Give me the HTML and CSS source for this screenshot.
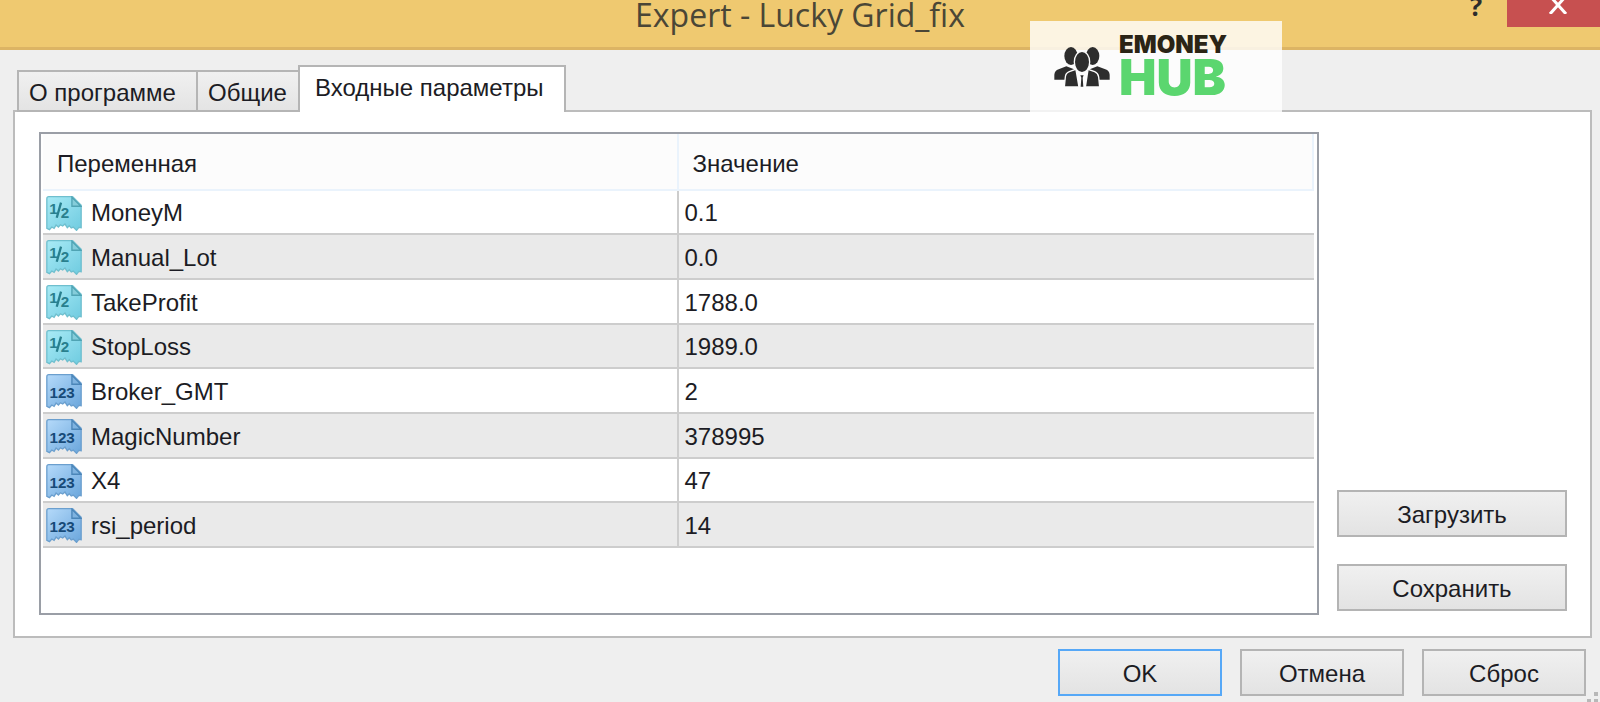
FILE: index.html
```html
<!DOCTYPE html>
<html lang="ru">
<head>
<meta charset="utf-8">
<title>Expert - Lucky Grid_fix</title>
<link rel="stylesheet" href="styles.css">
</head>
<body>
<svg class="defs" aria-hidden="true">
  <defs>
    <linearGradient id="teal" x1="0" y1="0" x2="1" y2="1"><stop offset="0" stop-color="#a9ebf6"/><stop offset="1" stop-color="#6fcbe0"/></linearGradient>
    <linearGradient id="blue" x1="0" y1="0" x2="1" y2="1"><stop offset="0" stop-color="#b5dafa"/><stop offset="1" stop-color="#6aa6dc"/></linearGradient>
    <path id="sheet" d="M8 2H80L106 28V96L99 95L92 104L82 94L76 97L70 90L64 96L57 85L50 91L43 87L37 94L30 88L24 98L17 94L10 102L2 98V8Q2 2 8 2Z"/>
    <symbol id="icon-double" viewBox="0 0 108 106">
      <use href="#sheet" fill="url(#teal)" stroke="#6fbfce" stroke-width="4"/>
      <path d="M78 4V31H105Z" fill="#85cdda" stroke="#4fa3b3" stroke-width="4"/>
      <text x="9" y="54" class="glyph glyph-teal">1</text>
      <path d="M45 20L32 66" stroke="#287f8e" stroke-width="7" fill="none"/>
      <text x="44" y="66" class="glyph glyph-teal">2</text>
    </symbol>
    <symbol id="icon-int" viewBox="0 0 108 106">
      <use href="#sheet" fill="url(#blue)" stroke="#6b9fce" stroke-width="4"/>
      <path d="M78 4V31H105Z" fill="#7fb3e0" stroke="#4a85b8" stroke-width="4"/>
      <text x="10" y="73" class="glyph glyph-blue">123</text>
    </symbol>
  </defs>
</svg>

<header class="titlebar">
  <h1 class="title">Expert - Lucky Grid_fix</h1>
  <div class="window-controls">
    <button class="help" aria-label="Справка">?</button>
    <button class="close" aria-label="Закрыть">
      <svg viewBox="0 0 18 18"><path d="M1 0L17 18M17 0L1 18" stroke="#fff" stroke-width="3" fill="none"/></svg>
    </button>
  </div>
  <div class="brand">
    <svg class="brand-people" viewBox="72 78 168 124" fill="#2d2d2d">
      <ellipse cx="123" cy="107" rx="20" ry="27"/>
      <ellipse cx="188" cy="107" rx="20" ry="27"/>
      <path d="M73 178V163Q74 151 86 147L109 138L140 150V178Z"/>
      <path d="M239 178V163Q238 151 226 147L202 138L172 150V178Z"/>
      <path d="M103 200L106 170Q107 158 118 154L137 147L156 160L174 147L194 154Q204 158 206 170L209 200Z" stroke="#fcfcfc" stroke-width="4"/>
      <path d="M136 148L156 156L176 148L168 201H145Z" fill="#fcfcfc"/>
      <path d="M151 165H161L158 172L160 199H152L154 172Z"/>
      <ellipse cx="156" cy="125" rx="23" ry="32" stroke="#fcfcfc" stroke-width="4"/>
    </svg>
    <div class="brand-text"><span class="brand-top">EMONEY</span><span class="brand-bottom">HUB</span></div>
  </div>
</header>

<main class="content">
  <div class="tabs" role="tablist">
    <button class="tab tab-about" role="tab">О программе</button>
    <button class="tab tab-common" role="tab">Общие</button>
    <button class="tab active" role="tab" aria-selected="true">Входные параметры</button>
  </div>
  <section class="panel" role="tabpanel">
    <div class="list">
      <table class="params">
        <thead><tr><th class="col-name">Переменная</th><th>Значение</th></tr></thead>
        <tbody>
          <tr><td><div class="name"><svg class="icon"><use href="#icon-double"/></svg>MoneyM</div></td><td>0.1</td></tr>
          <tr><td><div class="name"><svg class="icon"><use href="#icon-double"/></svg>Manual_Lot</div></td><td>0.0</td></tr>
          <tr><td><div class="name"><svg class="icon"><use href="#icon-double"/></svg>TakeProfit</div></td><td>1788.0</td></tr>
          <tr><td><div class="name"><svg class="icon"><use href="#icon-double"/></svg>StopLoss</div></td><td>1989.0</td></tr>
          <tr><td><div class="name"><svg class="icon"><use href="#icon-int"/></svg>Broker_GMT</div></td><td>2</td></tr>
          <tr><td><div class="name"><svg class="icon"><use href="#icon-int"/></svg>MagicNumber</div></td><td>378995</td></tr>
          <tr><td><div class="name"><svg class="icon"><use href="#icon-int"/></svg>X4</div></td><td>47</td></tr>
          <tr><td><div class="name"><svg class="icon"><use href="#icon-int"/></svg>rsi_period</div></td><td>14</td></tr>
        </tbody>
      </table>
    </div>
    <div class="side">
      <button class="btn">Загрузить</button>
      <button class="btn">Сохранить</button>
    </div>
  </section>
</main>

<footer class="actions">
  <button class="btn primary">OK</button>
  <button class="btn">Отмена</button>
  <button class="btn">Сброс</button>
  <svg class="grip" viewBox="0 0 12 12" fill="#b8b8b8"><path d="M8 2h4v4h-4zM8 9h4v3h-4zM1 9h4v3h-4z"/></svg>
</footer>
</body>
</html>
```
FILE: styles.css
```css
* { box-sizing: border-box; }

body {
  margin: 0;
  min-height: 100vh;
  display: flex;
  flex-direction: column;
  background: #efefef;
  color: #1c1c24;
  font-family: "Liberation Sans", sans-serif;
  font-size: 24px;
  line-height: 32px;
}

button { font: inherit; color: inherit; margin: 0; }

.defs { position: absolute; width: 0; height: 0; }

.titlebar {
  position: relative;
  height: 50px;
  background: #efc970;
  border-bottom: 3px solid #dcb464;
}

.title {
  margin: 0;
  text-align: center;
  font: 400 32px/30px "Open Sans", "Noto Sans", sans-serif;
  color: #4a4636;
}

.window-controls {
  position: absolute;
  top: 0;
  right: 0;
  display: flex;
  height: 27px;
  overflow: hidden;
}

.window-controls button {
  display: flex;
  justify-content: center;
  align-items: flex-start;
  border: 0;
  padding: 0;
}

.window-controls .help {
  width: 62px;
  background: none;
  font: 700 26px/12px "Open Sans", sans-serif;
  color: #2c2c2c;
}

.window-controls .close {
  width: 93px;
  background: #c75050;
}

.close svg { width: 18px; height: 18px; margin: -4px 0 0 8px; }

.brand {
  position: absolute;
  top: 21px;
  right: 318px;
  width: 252px;
  height: 91px;
  z-index: 2;
  display: flex;
  gap: 9px;
  padding: 12px 0 0 24px;
  background: rgba(255, 255, 255, 0.8);
}

.brand-people { width: 56px; height: 42px; margin-top: 13px; }

.brand-text {
  display: flex;
  flex-direction: column;
  font-family: Inter, sans-serif;
  font-weight: 900;
}

.brand-top { font-size: 24px; line-height: 24px; color: #2b2415; }
.brand-bottom { font-size: 50px; line-height: 41px; color: #5bd66f; }

.content {
  flex: 1;
  display: flex;
  flex-direction: column;
  padding: 15px 8px 0 13px;
}

.tabs {
  display: flex;
  align-items: flex-end;
  margin: 0 0 -2px 4px;
  z-index: 1;
}

.tab {
  height: 42px;
  padding: 4px 10px 0;
  border: 2px solid #b5b5b5;
  border-right-width: 0;
  background: linear-gradient(#f0f0f0, #e4e4e4);
  text-align: left;
}

.tab-about { width: 179px; }
.tab-common { width: 102px; }

.tab.active {
  width: 268px;
  height: 47px;
  padding: 0 15px 4px;
  border-right-width: 2px;
  border-bottom: 0;
  background: #fff;
}

.panel {
  flex: 1;
  display: flex;
  gap: 18px;
  padding: 20px 23px 21px 24px;
  border: 2px solid #bcbcbc;
  background: #fff;
}

.list {
  flex: 1;
  padding: 0 3px 0 2px;
  border: 2px solid #9a9ea6;
}

.params {
  width: 100%;
  border-collapse: separate;
  border-spacing: 0;
  table-layout: fixed;
}

.params th {
  height: 57px;
  padding: 4px 14px 0;
  border-right: 2px solid #eaf3fc;
  border-bottom: 2px solid #eaf3fc;
  background: #fcfcfc;
  font-weight: 400;
  text-align: left;
}

.params .col-name { width: 50%; }

.params td {
  height: 45px;
  padding: 2px 6px 0;
  border-bottom: 2px solid #cdcdcd;
}

.params td:first-child {
  padding: 2px 3px 0;
  border-right: 2px solid #cdcdcd;
}

.params tr:nth-child(3n+1) td { height: 44px; }
.params tr:nth-child(even) td { background: #eaeaea; }

.name { display: flex; align-items: center; gap: 9px; }
.icon { width: 36px; height: 35px; }

.glyph { font: 700 46px "Liberation Sans", sans-serif; }
.glyph-teal { fill: #287f8e; }
.glyph-blue { fill: #174a78; }

.side {
  width: 230px;
  display: flex;
  flex-direction: column;
  justify-content: flex-end;
  gap: 27px;
  padding-bottom: 4px;
}

.btn {
  height: 47px;
  padding: 2px 8px 0;
  border: 2px solid #b4b4b4;
  background: linear-gradient(#f0f0f0, #e3e3e3);
}

.actions {
  position: relative;
  display: flex;
  justify-content: flex-end;
  gap: 18px;
  padding: 11px 14px 6px;
}

.actions .btn { width: 164px; }
.btn.primary { border-color: #56a8f7; }

.grip {
  position: absolute;
  right: 2px;
  bottom: 0;
  width: 12px;
  height: 12px;
}
```
